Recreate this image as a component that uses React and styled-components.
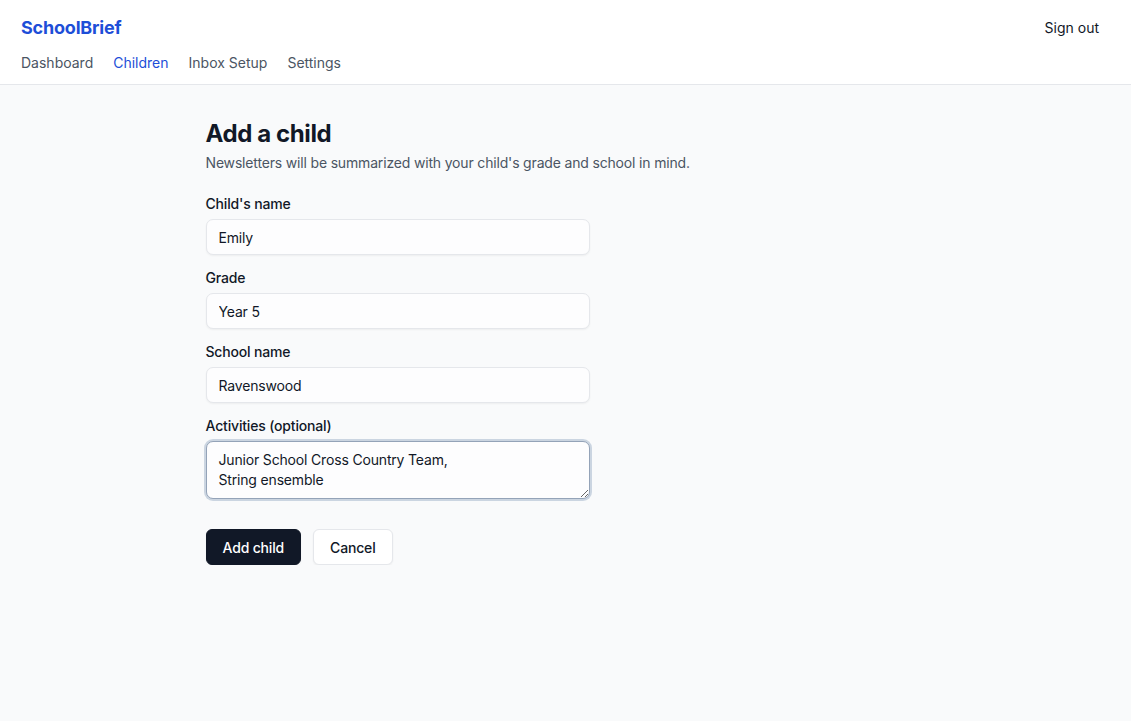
import styled, { createGlobalStyle } from 'styled-components'

const GlobalStyle = createGlobalStyle`
  * { box-sizing: border-box; }
  body {
    margin: 0;
    background: #f9fafb;
    font-family: Inter, "Noto Sans", "Liberation Sans", sans-serif;
    color: #111827;
    letter-spacing: -0.17px;
    -webkit-font-smoothing: antialiased;
  }
  input, textarea, button {
    letter-spacing: inherit;
  }
`

const Header = styled.header`
  background: #fff;
  border-bottom: 1px solid #e5e7eb;
  padding: 17px 32px 0 21px;
  height: 85px;
  display: flex;
  justify-content: space-between;
  align-items: flex-start;
`

const Brand = styled.div`
  display: flex;
  flex-direction: column;
`

const Logo = styled.a`
  font-size: 18px;
  line-height: 22px;
  font-weight: 700;
  color: #1d4ed8;
  text-decoration: none;
  letter-spacing: -0.2px;
`

const Nav = styled.nav`
  display: flex;
  gap: 20px;
  margin-top: 14px;
`

const NavLink = styled.a`
  font-size: 14px;
  line-height: 20px;
  letter-spacing: 0;
  color: ${p => (p.$active ? '#1d4ed8' : '#4b5563')};
  text-decoration: none;
`

const SignOut = styled.button`
  background: none;
  border: none;
  padding: 0;
  margin-top: 1px;
  font: inherit;
  font-size: 14px;
  line-height: 20px;
  letter-spacing: 0;
  color: #111827;
`

const Main = styled.main`
  max-width: 720px;
  margin: 0 auto;
  padding-top: 33px;
`

const Title = styled.h1`
  margin: 0;
  font-size: 24px;
  line-height: 32px;
  font-weight: 700;
  letter-spacing: -0.4px;
`

const Subtitle = styled.p`
  margin: 3px 0 21px;
  font-size: 14px;
  line-height: 20px;
  color: #4b5563;
`

const Form = styled.form`
  display: flex;
  flex-direction: column;
  gap: 13px;
  max-width: 384px;
`

const Field = styled.div`
  display: flex;
  flex-direction: column;
  gap: 5px;
`

const Label = styled.label`
  font-size: 14px;
  line-height: 20px;
  font-weight: 500;
  color: #111827;
`

const Input = styled.input`
  height: 36px;
  padding: 0 12px;
  border: 1px solid #e5e7eb;
  border-radius: 7px;
  background: #fdfdfe;
  box-shadow: 0 1px 2px rgba(0, 0, 0, 0.05);
  font: inherit;
  font-size: 14px;
  color: #111827;
  outline: none;
`

const TextArea = styled.textarea`
  height: 58px;
  padding: 8px 12px;
  border: 1px solid #94a3b8;
  border-radius: 7px;
  background: #fdfdfe;
  box-shadow: 0 0 0 2px #cbd5e1;
  font: inherit;
  font-size: 14px;
  line-height: 20px;
  color: #111827;
  outline: none;
  resize: vertical;
`

const Actions = styled.div`
  display: flex;
  gap: 12px;
  margin-top: 17px;
`

const Button = styled.button`
  height: 36px;
  padding: 0 16px;
  border-radius: 6px;
  font: inherit;
  font-size: 14px;
  font-weight: 500;
  border: 1px solid ${p => (p.$primary ? '#111827' : '#e5e7eb')};
  background: ${p => (p.$primary ? '#111827' : '#fff')};
  color: ${p => (p.$primary ? '#fff' : '#111827')};
  box-shadow: 0 1px 2px rgba(0, 0, 0, 0.05);
`

const links = ['Dashboard', 'Children', 'Inbox Setup', 'Settings']

const fields = [
  { id: 'name', label: "Child's name", value: 'Emily' },
  { id: 'grade', label: 'Grade', value: 'Year 5' },
  { id: 'school', label: 'School name', value: 'Ravenswood' }
]

export default function App () {
  return (
    <>
      <GlobalStyle />
      <Header>
        <Brand>
          <Logo href='#'>SchoolBrief</Logo>
          <Nav>
            {links.map(l => (
              <NavLink key={l} href='#' $active={l === 'Children'}>{l}</NavLink>
            ))}
          </Nav>
        </Brand>
        <SignOut>Sign out</SignOut>
      </Header>
      <Main>
        <Title>Add a child</Title>
        <Subtitle>Newsletters will be summarized with your child's grade and school in mind.</Subtitle>
        <Form onSubmit={e => e.preventDefault()}>
          {fields.map(f => (
            <Field key={f.id}>
              <Label htmlFor={f.id}>{f.label}</Label>
              <Input id={f.id} defaultValue={f.value} />
            </Field>
          ))}
          <Field>
            <Label htmlFor='activities'>Activities (optional)</Label>
            <TextArea
              id='activities'
              rows={2}
              defaultValue={'Junior School Cross Country Team,\nString ensemble'}
            />
          </Field>
          <Actions>
            <Button type='submit' $primary>Add child</Button>
            <Button type='button'>Cancel</Button>
          </Actions>
        </Form>
      </Main>
    </>
  )
}
